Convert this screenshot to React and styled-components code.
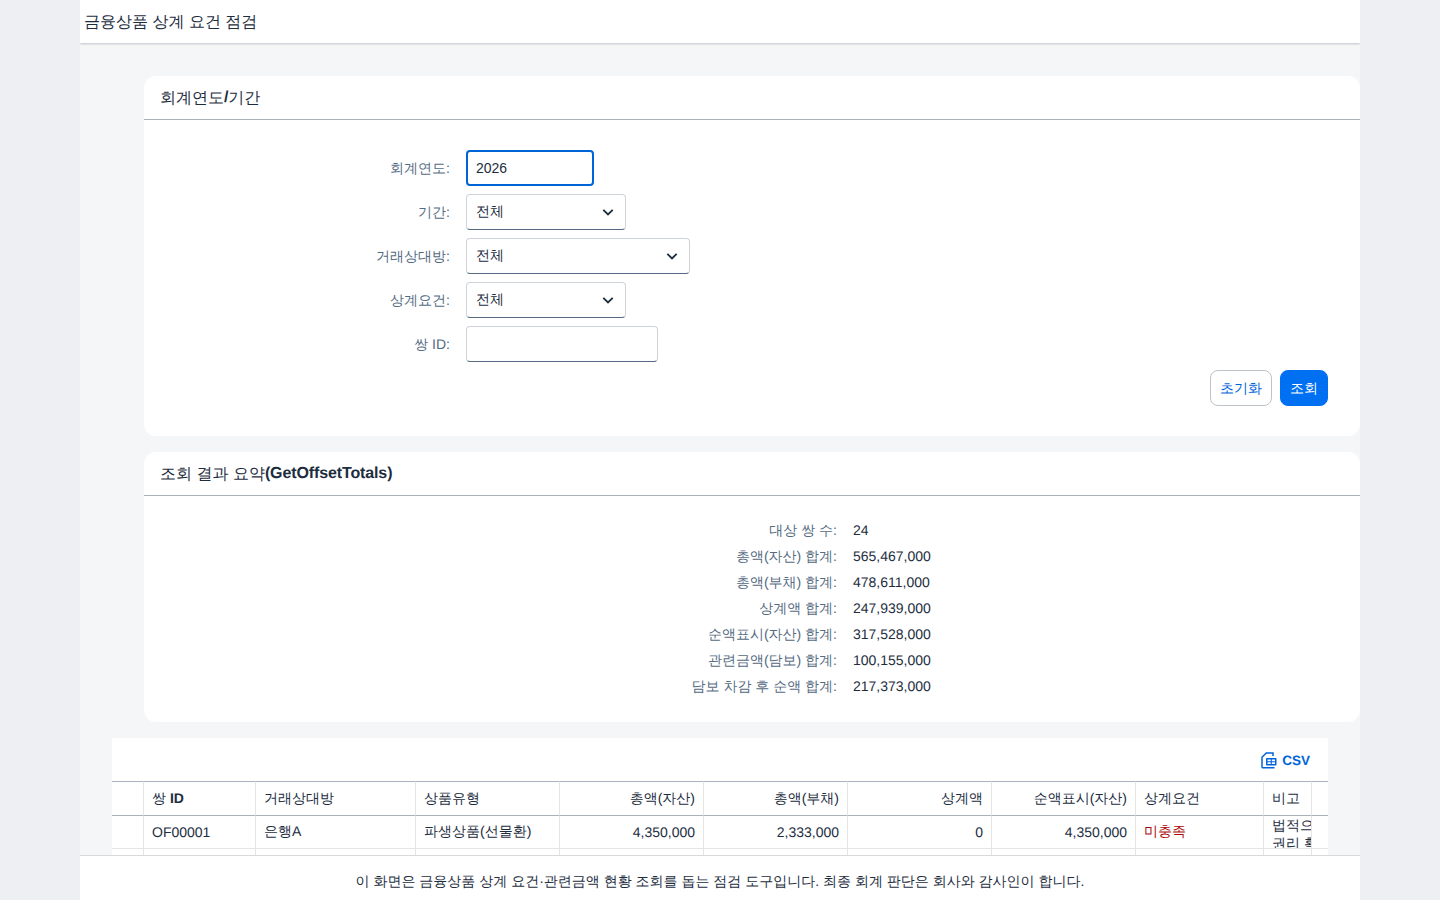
import React from "react";
import styled, { createGlobalStyle } from "styled-components";

const Global = createGlobalStyle`
  html, body { margin: 0; padding: 0; height: 100%; background: #edeff2; overflow: hidden; }
  * { box-sizing: border-box; }
  body { font-family: "Liberation Sans", sans-serif; font-size: 14px; color: #1d2d3e; text-rendering: geometricPrecision; }
`;

const Shell = styled.div`
  position: relative;
  width: 1280px;
  height: 900px;
  margin: 0 auto;
  background: #f5f6f7;
  display: flex;
  flex-direction: column;
  overflow: hidden;
`;
const Header = styled.header`
  height: 43px;
  flex: none;
  background: #fff;
  padding: 2px 4px 0;
  display: flex;
  align-items: center;
  font-size: 16px;
  color: #1d2d3e;
  box-shadow: 0 1px 2px rgba(34, 53, 72, 0.25);
  z-index: 1;
`;
const Main = styled.main`
  flex: 1;
  min-height: 0;
  padding: 33px 32px 0;
  overflow: hidden;
  display: flex;
  flex-direction: column;
  gap: 16px;
`;
const Card = styled.section`
  flex: none;
  margin: 0 -32px 0 32px;
  background: #fff;
  border-radius: 12px;
`;
const CardTitle = styled.h2`
  margin: 0;
  height: 44px;
  padding: 1px 16px 0;
  display: flex;
  align-items: center;
  font-size: 16px;
  font-weight: 400;
  border-bottom: 1px solid #a8b2bd;
  color: #1d2d3e;
  white-space: pre;
  b { font-weight: 700; letter-spacing: -0.12px; }
`;
const FormBody = styled.div`
  height: 316px;
  padding: 30px 32px 0 16px;
  display: flex;
  flex-direction: column;
`;
const FormRow = styled.div`
  display: flex;
  align-items: center;
  height: 36px;
  margin-bottom: 8px;
`;
const FieldLabel = styled.label`
  width: 306px;
  padding: 2px 16px 0 0;
  text-align: right;
  color: #556b82;
  font-size: 14px;
`;
const TextField = styled.input`
  width: ${(p) => p.$w}px;
  height: 36px;
  padding: 0 9px;
  border: 1px solid #cdd3d9;
  border-bottom-color: #556b81;
  border-radius: 4px;
  font: inherit;
  font-size: 14px;
  color: #1d2d3e;
  background: #fff;
  outline: none;
  &[data-focus="true"] {
    border: 2px solid #0064d9;
    padding: 0 8px;
  }
`;
const Select = styled.div`
  width: ${(p) => p.$w}px;
  height: 36px;
  padding: 0 11px 0 9px;
  border: 1px solid #cdd3d9;
  border-bottom-color: #556b81;
  border-radius: 4px;
  display: flex;
  align-items: center;
  justify-content: space-between;
  background: #fff;
  color: #1d2d3e;
`;
const Actions = styled.div`
  display: flex;
  justify-content: flex-end;
  gap: 8px;
`;
const Btn = styled.button`
  height: 36px;
  padding: 1px 9px 0;
  border-radius: 8px;
  font: inherit;
  font-size: 14px;
  border: 1px solid ${(p) => (p.$primary ? "#0070f2" : "#bcc3ca")};
  background: ${(p) => (p.$primary ? "#0070f2" : "#fff")};
  color: ${(p) => (p.$primary ? "#fff" : "#0064d9")};
`;
const SummaryBody = styled.div`
  height: 226px;
  padding-top: 21px;
  display: grid;
  grid-template-columns: 693px 1fr;
  grid-auto-rows: 26px;
  column-gap: 16px;
  align-items: center;
`;
const SumLabel = styled.div`
  text-align: right;
  color: #556b82;
  padding-top: 2px;
`;
const SumValue = styled.div`
  color: #1d2d3e;
`;
const TablePanel = styled.div`
  flex: 1;
  min-height: 0;
  background: #fff;
  overflow: hidden;
`;
const Toolbar = styled.div`
  height: 43px;
  padding: 2px 18px 0 0;
  display: flex;
  align-items: center;
  justify-content: flex-end;
`;
const CsvLink = styled.span`
  display: flex;
  align-items: center;
  gap: 5px;
  color: #0064d9;
  font-size: 13.5px;
  font-weight: 700;
`;
const Table = styled.table`
  width: 1216px;
  table-layout: fixed;
  border-collapse: separate;
  border-spacing: 0;
  color: #1d2d3e;
  font-size: 14px;
`;
const Th = styled.th`
  height: 35px;
  padding: 2px 8px 0;
  font-weight: 400;
  text-align: ${(p) => (p.$right ? "right" : "left")};
  border-top: 1px solid #a8b2bd;
  border-bottom: 1px solid #a8b2bd;
  border-right: 1px solid #e5e5e5;
  b { font-weight: 700; }
  &:last-child { border-right: 0; }
`;
const Td = styled.td`
  height: 33px;
  padding: 0 8px;
  text-align: ${(p) => (p.$right ? "right" : "left")};
  border-bottom: 1px solid #e5e5e5;
  border-right: 1px solid #e5e5e5;
  color: ${(p) => (p.$bad ? "#aa0808" : "#1d2d3e")};
  &:last-child { border-right: 0; }
`;
const Note = styled.div`
  height: 32px;
  overflow: hidden;
  line-height: 18px;
  margin-right: -8px;
  white-space: pre;
`;
const Footer = styled.footer`
  position: absolute;
  left: 0;
  right: 0;
  bottom: 0;
  height: 45px;
  padding-top: 9px;
  background: #fff;
  border-top: 1px solid #d9d9d9;
  display: flex;
  align-items: center;
  justify-content: center;
  color: #1d2d3e;
  font-size: 14px;
`;

const Chevron = () => (
  <svg width="12" height="12" viewBox="0 0 12 12" fill="none">
    <path d="M1.3 3.8 6 8.4l4.7-4.6" stroke="#1d2d3e" strokeWidth="1.8" />
  </svg>
);
const CsvIcon = () => (
  <svg width="17" height="17" viewBox="0 0 17 17" fill="none">
    <path d="M2 15.8V5.2L6.2 1H13v3M2 15.8h12.5" stroke="#0064d9" strokeWidth="1.5" />
    <rect x="6" y="6" width="10.5" height="7.5" rx="1" fill="#0064d9" />
    <path d="M7.5 7.6h3.2v1.6H7.500zM11.800 7.600h3.200v1.600h-3.200zM7.500 10.300h3.200v1.600H7.500zM11.800 10.300h3.200v1.600h-3.200z" fill="#fff" />
  </svg>
);

const summary = [
  ["대상 쌍 수:", "24"],
  ["총액(자산) 합계:", "565,467,000"],
  ["총액(부채) 합계:", "478,611,000"],
  ["상계액 합계:", "247,939,000"],
  ["순액표시(자산) 합계:", "317,528,000"],
  ["관련금액(담보) 합계:", "100,155,000"],
  ["담보 차감 후 순액 합계:", "217,373,000"],
];
const widths = [32, 112, 160, 144, 144, 144, 144, 144, 128, 48, 16];

export default function App() {
  return (
    <Shell>
      <Global />
      <Header>금융상품 상계 요건 점검</Header>
      <Main>
        <Card>
          <CardTitle>회계연도<b>/</b>기간</CardTitle>
          <FormBody>
            <FormRow>
              <FieldLabel>회계연도:</FieldLabel>
              <TextField $w={128} data-focus="true" defaultValue="2026" />
            </FormRow>
            <FormRow>
              <FieldLabel>기간:</FieldLabel>
              <Select $w={160}>전체<Chevron /></Select>
            </FormRow>
            <FormRow>
              <FieldLabel>거래상대방:</FieldLabel>
              <Select $w={224}>전체<Chevron /></Select>
            </FormRow>
            <FormRow>
              <FieldLabel>상계요건:</FieldLabel>
              <Select $w={160}>전체<Chevron /></Select>
            </FormRow>
            <FormRow>
              <FieldLabel>쌍 ID:</FieldLabel>
              <TextField $w={192} />
            </FormRow>
            <Actions>
              <Btn>초기화</Btn>
              <Btn $primary>조회</Btn>
            </Actions>
          </FormBody>
        </Card>
        <Card>
          <CardTitle>조회 결과 요약<b>(GetOffsetTotals)</b></CardTitle>
          <SummaryBody>
            {summary.map(([k, v]) => (
              <React.Fragment key={k}>
                <SumLabel>{k}</SumLabel>
                <SumValue>{v}</SumValue>
              </React.Fragment>
            ))}
          </SummaryBody>
        </Card>
        <TablePanel>
          <Toolbar>
            <CsvLink><CsvIcon />CSV</CsvLink>
          </Toolbar>
          <Table>
            <colgroup>
              {widths.map((w, i) => <col key={i} style={{ width: w }} />)}
            </colgroup>
            <thead>
              <tr>
                <Th />
                <Th>쌍 <b>ID</b></Th>
                <Th>거래상대방</Th>
                <Th>상품유형</Th>
                <Th $right>총액(자산)</Th>
                <Th $right>총액(부채)</Th>
                <Th $right>상계액</Th>
                <Th $right>순액표시(자산)</Th>
                <Th>상계요건</Th>
                <Th>비고</Th>
                <Th />
              </tr>
            </thead>
            <tbody>
              <tr>
                <Td />
                <Td>OF00001</Td>
                <Td>은행A</Td>
                <Td>파생상품(선물환)</Td>
                <Td $right>4,350,000</Td>
                <Td $right>2,333,000</Td>
                <Td $right>0</Td>
                <Td $right>4,350,000</Td>
                <Td $bad>미충족</Td>
                <Td><Note>{"법적으로\n권리 확정"}</Note></Td>
                <Td />
              </tr>
              <tr>
                {widths.map((w, i) => <Td key={i} />)}
              </tr>
            </tbody>
          </Table>
        </TablePanel>
      </Main>
      <Footer>이 화면은 금융상품 상계 요건·관련금액 현황 조회를 돕는 점검 도구입니다. 최종 회계 판단은 회사와 감사인이 합니다.</Footer>
    </Shell>
  );
}
